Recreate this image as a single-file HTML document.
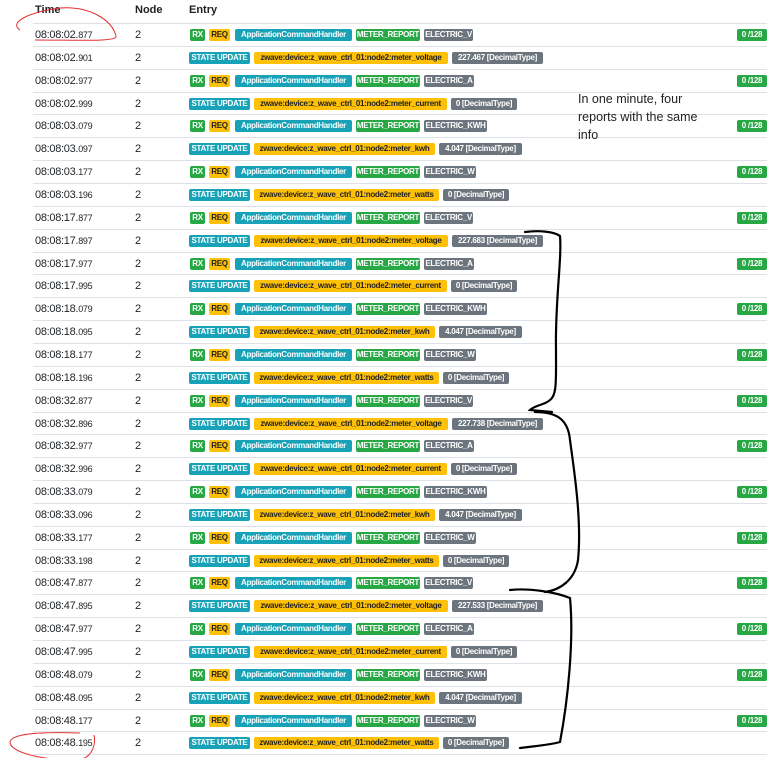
<!DOCTYPE html><html><head><meta charset="utf-8"><style>
body{margin:0;width:767px;height:758px;background:#fff;font-family:"Liberation Sans",sans-serif;position:relative;overflow:hidden;color:#212529}
.h{position:absolute;top:4px;font-size:11px;font-weight:bold;color:#222}
.r{position:absolute;left:33px;width:734px;height:22px;border-top:1px solid #dee2e6}
.t{position:absolute;left:2px;top:5px;font-size:11px;letter-spacing:-0.3px}
.t small{font-size:9px}
.n{position:absolute;left:102px;top:5px;font-size:11px}
.b{position:absolute;top:5px;height:12px;line-height:12px;font-size:8px;font-weight:bold;color:#fff;text-align:center;border-radius:2px;white-space:nowrap;overflow:hidden;letter-spacing:-0.3px}
.g{background:#28a745}.y{background:#ffc107;color:#222}.c{background:#17a2b8}.s{background:#6c757d}
.note{position:absolute;left:578px;top:90px;font-size:12.5px;line-height:18px;color:#222}
</style></head><body>
<div class="h" style="left:35px">Time</div><div class="h" style="left:135px">Node</div><div class="h" style="left:189px">Entry</div>
<div id="rows"></div>
<script>
(function(){
var T=[["02.877","02.901","02.977","02.999","03.079","03.097","03.177","03.196"],["17.877","17.897","17.977","17.995","18.079","18.095","18.177","18.196"],["32.877","32.896","32.977","32.996","33.079","33.096","33.177","33.198"],["47.877","47.895","47.977","47.995","48.079","48.095","48.177","48.195"]];
var V=["227.467","227.683","227.738","227.533"];
var h="";
function b(c,l,w,t){return '<div class="b '+c+'" style="left:'+(l-33)+'px;width:'+w+'px">'+t+'</div>';}
for(var g=0;g<4;g++)for(var i=0;i<8;i++){var k=g*8+i;var yy=(23+k*22.85).toFixed(1);var tm=T[g][i];var p=tm.split(".");
h+='<div class="r" style="top:'+yy+'px"><div class="t">08:08:'+p[0]+'.<small>'+p[1]+'</small></div><div class="n">2</div>';
if(i%2==0){var e=[["ELECTRIC_V",49],["ELECTRIC_A",50],["ELECTRIC_KWH",63],["ELECTRIC_W",52]][i/2];
h+=b("g",190,15,"RX")+b("y",209,21,"REQ")+b("c",235,117,"ApplicationCommandHandler")+b("g",356,64,"METER_REPORT")+b("s",424,e[1],e[0])+b("g",737,30,"0 /128");}
else{var m=[["voltage",194,V[g]+" [DecimalType]",91],["current",193,"0 [DecimalType]",66],["kwh",181,"4.047 [DecimalType]",83],["watts",185,"0 [DecimalType]",66]][(i-1)/2];
h+=b("c",189,61,"STATE UPDATE")+b("y",254,m[1],"zwave:device:z_wave_ctrl_01:node2:meter_"+m[0])+b("s",254+m[1]+4,m[3],m[2]);}
h+='</div>';}
h+='<div class="r" style="top:754px;height:4px"></div>';
document.getElementById("rows").innerHTML=h;
})();
</script>
<div class="note">In one minute, four<br>reports with the same<br>info</div>
<svg width="767" height="758" style="position:absolute;left:0;top:0" fill="none">
<path d="M20,30 C8,22 30,12 60,8 C90,6 112,20 116,36 C118,42 80,40 35,40" stroke="#e03030" stroke-width="1"/>
<path d="M80,733 C50,732 12,732 10,742 C10,752 40,760 75,760 C92,760 96,745 94,735" stroke="#e03030" stroke-width="1"/>
<g stroke="#000" stroke-width="2.2" stroke-linecap="round">
<path d="M525,232 C540,230 555,232 560,236 C562,260 555,300 556,350 C556,380 557,395 550,400 C545,405 535,405 530,410 L552,412"/>
<path d="M535,412 C555,412 568,418 570,440 C574,470 582,520 578,560 C575,580 560,590 545,592"/>
<path d="M510,590 C530,588 555,592 570,598 C574,640 568,700 560,742 C550,745 535,746 520,748"/>
</g></svg>
</body></html>
